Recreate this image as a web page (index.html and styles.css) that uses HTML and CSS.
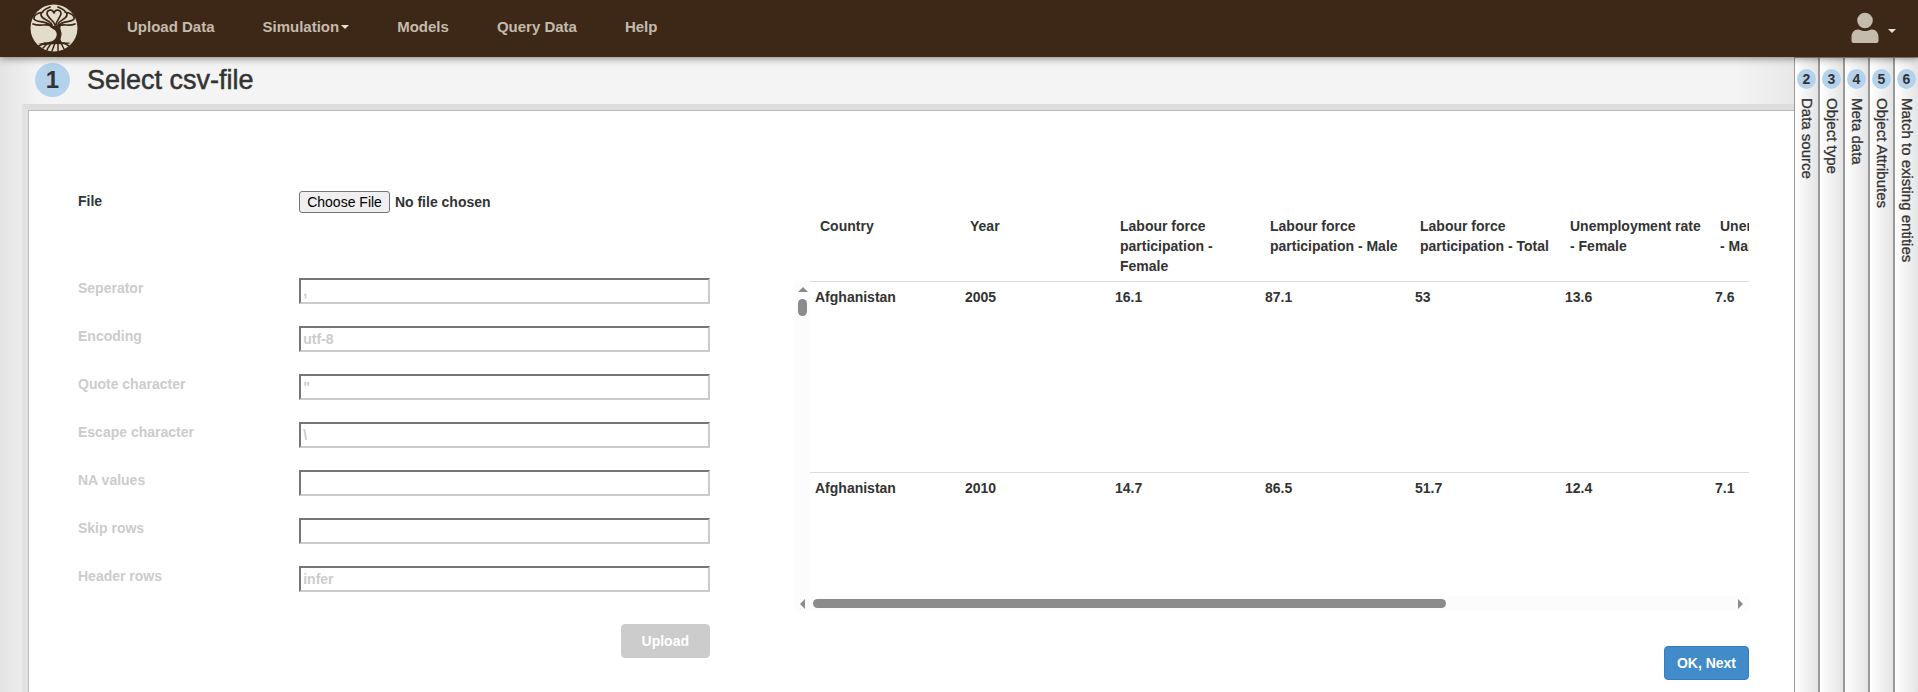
FILE: index.html
```html
<!DOCTYPE html>
<html lang="en">
<head>
<meta charset="utf-8">
<title>Select csv-file</title>
<link rel="stylesheet" href="styles.css">
</head>
<body>
<nav class="navbar">
  <a class="brand" href="#" aria-label="Home">
    <svg viewBox="0 0 48 48" width="48" height="48" fill="none" stroke="#3d2817" stroke-linecap="round" stroke-linejoin="round">
      <circle cx="24" cy="24" r="23.500" fill="#e3dccb" stroke="none"/>
      <path fill="#3d2817" stroke="none" d="M18 20 L24 22 L32 20 C29 23 31 26 31.500 29 C32 33 29 35 32 38 C35 39 38 38 41 39 C36 41 32 40 27 40 C20 40 14 42 8 40 C14 38 22 39 25 35 C28 31 27 27 23 25 C21 24 19 22 18 20 Z"/>
      <path stroke-width="1.700" d="M22 22 C16 19 11 23 3 20 M20 21 C14 16 7 19 4 15 C3 11 8 9 13 8 M22 21 C20 16 12 16 11 11 C11 7 15 5 20 3 M25 21 C24 17 18 14 17 10 C17 5 23 5 24 9 C25 5 31 5 31 10 C30 14 26 17 26 21 M28 21 C28 16 36 16 37 11 C37 7 33 5 28 3 M29 21 C34 16 41 19 44 15 C45 11 40 9 35 8 M29 22 C34 19 38 23 45 20"/>
      <path stroke-width="1.500" d="M15 39 L9 42 M18 39 L13 44 M21 39 C20 42 18 43 17 46 M25 39 L22 47 M28 39 L28 47 M31 39 L34 45 M34 39 L39 42"/>
    </svg>
  </a>
  <div class="menu">
    <a href="#">Upload Data</a>
    <a href="#">Simulation<span class="caret"></span></a>
    <a href="#">Models</a>
    <a href="#">Query Data</a>
    <a href="#">Help</a>
  </div>
  <button class="user" type="button" aria-label="Account">
    <svg viewBox="0 0 28 32" width="28" height="32" fill="#c4bbad">
      <circle cx="14" cy="8.500" r="7.800"/>
      <path d="M7 17.500 C9 17.500 10 19 14 19 C18 19 19 17.500 21 17.500 C25 17.500 27.500 21 27.500 25 V29 Q27.500 31 25.500 31 H2.500 Q.5 31 .5 29 V25 C.5 21 3 17.500 7 17.500 Z"/>
    </svg>
    <span class="caret caret-user"></span>
  </button>
</nav>
<div class="wizard">
  <main class="step">
    <header class="step-head"><span class="num num-big">1</span><h1>Select csv-file</h1></header>
    <section class="panel">
      <form class="form">
        <div class="field field-file"><label for="file">File</label><input id="file" type="file"></div>
        <div class="field"><label for="sep">Seperator</label><input id="sep" type="text" value=","></div>
        <div class="field"><label for="enc">Encoding</label><input id="enc" type="text" value="utf-8"></div>
        <div class="field"><label for="quote">Quote character</label><input id="quote" type="text" value="&quot;"></div>
        <div class="field"><label for="esc">Escape character</label><input id="esc" type="text" value="\"></div>
        <div class="field"><label for="na">NA values</label><input id="na" type="text"></div>
        <div class="field"><label for="skip">Skip rows</label><input id="skip" type="text"></div>
        <div class="field"><label for="head">Header rows</label><input id="head" type="text" value="infer"></div>
        <button class="btn btn-upload" type="button">Upload</button>
      </form>
      <div class="preview">
        <div class="viewer">
          <div class="table-clip">
            <table>
              <thead><tr><th>Country</th><th>Year</th><th>Labour force participation - Female</th><th>Labour force participation - Male</th><th>Labour force participation - Total</th><th>Unemployment rate - Female</th><th>Unemployment rate - Male</th></tr></thead>
              <tbody>
                <tr><td>Afghanistan</td><td>2005</td><td>16.1</td><td>87.1</td><td>53</td><td>13.6</td><td>7.6</td></tr>
                <tr><td>Afghanistan</td><td>2010</td><td>14.7</td><td>86.5</td><td>51.7</td><td>12.4</td><td>7.1</td></tr>
              </tbody>
            </table>
          </div>
          <div class="vbar"><span class="arrow arrow-up"></span><span class="vthumb"></span></div>
          <div class="hbar"><span class="arrow arrow-left"></span><span class="htrack"><span class="hthumb"></span></span><span class="arrow arrow-right"></span></div>
        </div>
        <button class="btn btn-next" type="button">OK, Next</button>
      </div>
    </section>
  </main>
  <aside class="tabs">
    <button class="tab" type="button"><span class="num">2</span><span class="tab-label">Data source</span></button>
    <button class="tab" type="button"><span class="num">3</span><span class="tab-label">Object type</span></button>
    <button class="tab" type="button"><span class="num">4</span><span class="tab-label">Meta data</span></button>
    <button class="tab" type="button"><span class="num">5</span><span class="tab-label">Object Attributes</span></button>
    <button class="tab" type="button"><span class="num">6</span><span class="tab-label">Match to existing entities</span></button>
  </aside>
</div>
</body>
</html>
```

FILE: styles.css
```css
* { box-sizing: border-box; }

body {
  margin: 0;
  min-height: 100vh;
  display: flex;
  flex-direction: column;
  overflow: hidden;
  font: bold 14px/20px "Liberation Sans", Arial, sans-serif;
  color: #333;
  background: #fff;
}

button, input { font: inherit; color: inherit; }

.navbar {
  display: flex;
  align-items: center;
  height: 57px;
  padding: 0 22px 2px 30px;
  background: #3d2817;
  box-shadow: 0 1px 8px rgba(0, 0, 0, .5);
  z-index: 1;
}
.brand { display: flex; }
.menu { display: flex; gap: 48px; margin: 0 auto 0 49px; padding-bottom: 1px; }
.menu a {
  display: flex;
  align-items: center;
  gap: 2px;
  color: #c4bbad;
  font-size: 15px;
  text-decoration: none;
}
.caret {
  border: 4px solid transparent;
  border-top-color: #e8e0d4;
  border-bottom: 0;
}
.user {
  display: flex;
  align-items: center;
  gap: 9px;
  padding: 0;
  border: 0;
  background: none;
}
.caret-user { margin-top: 6px; }

.wizard { flex: 1; display: flex; }
.step {
  flex: 1;
  min-width: 0;
  display: flex;
  flex-direction: column;
  background: linear-gradient(90deg, #e4e4e4, #f4f4f4 40px, #f4f4f4 calc(100% - 60px), #e8e8e8);
}
.step-head {
  display: flex;
  align-items: center;
  gap: 17px;
  height: 47px;
  padding: 0 0 1px 35px;
}
h1 { margin: 0; font-size: 27px; font-weight: normal; -webkit-text-stroke: .5px #333; }
.num {
  display: flex;
  align-items: center;
  justify-content: center;
  width: 19px;
  height: 20px;
  border-radius: 50%;
  background: #b5d2ec;
}
.num-big { width: 35px; height: 34px; font-size: 24px; }

.panel {
  flex: 1;
  display: grid;
  grid-template-columns: 632fr 954fr;
  gap: 85px;
  align-items: start;
  margin-left: 22px;
  padding: 81px 45px 0 50px;
  border: solid #ddd;
  border-width: 6px 0 0 6px;
  border-left-color: #e2e2e2;
  background: #fff;
  box-shadow: inset 1px 1px #bbb;
}

.form { display: flex; flex-direction: column; }
.field {
  display: grid;
  grid-template-columns: 35% 65%;
  align-items: start;
  height: 48px;
  color: #ccc;
}
.field-file { height: 87px; color: #333; }
.field input[type="text"] {
  width: 100%;
  height: 26px;
  padding: 2px;
  border: 2px solid;
  border-color: #767676 #ccc #ccc #767676;
  background: #fff;
}
.field input[type="file"]::file-selector-button {
  height: 22px;
  margin-right: 5px;
  padding: 0 7px;
  border: 1px solid #767676;
  border-radius: 3px;
  background: #efefef;
  color: #000;
  font-weight: normal;
}

.btn {
  align-self: flex-end;
  height: 34px;
  padding: 0 12px;
  border: 1px solid #357ebd;
  border-radius: 4px;
  background: #428bca;
  color: #fff;
}
.btn-upload { margin-top: 10px; padding: 0 20px; background: #ccc; border-color: #ccc; }

.preview { display: flex; flex-direction: column; gap: 35px; padding-top: 20px; }
.viewer { display: grid; grid-template-columns: 15px 1fr; grid-template-rows: 70px 315px 15px; min-width: 0; }
.table-clip { grid-area: 1 / 2 / 3 / 3; overflow: hidden; }
table { width: 1050px; table-layout: fixed; border-collapse: collapse; }
th, td { vertical-align: top; text-align: left; }
th { height: 70px; padding: 5px 5px 5px 10px; }
td { height: 191px; padding: 5px; border-top: 1px solid #ddd; }

.vbar {
  grid-area: 2 / 1;
  display: flex;
  flex-direction: column;
  align-items: center;
  gap: 7px;
  padding-top: 6px;
  background: #fcfcfc;
}
.vthumb { width: 9px; height: 17px; border-radius: 5px; background: #8b8b8b; }
.hbar { grid-area: 3 / 1 / 4 / 3; display: flex; align-items: center; gap: 8px; padding: 0 6px 0 5px; background: #fcfcfc; }
.htrack { flex: 1; display: flex; }
.hthumb { width: 69%; height: 9px; border-radius: 5px; background: #8b8b8b; }
.arrow { border: 5px solid transparent; }
.arrow-up { border-top: 0; border-bottom-color: #8b8b8b; }
.arrow-left { border-left: 0; border-right-color: #8b8b8b; }
.arrow-right { border-right: 0; border-left-color: #8b8b8b; }

.tabs { display: flex; margin-right: -1px; }
.tab {
  display: flex;
  flex-direction: column;
  align-items: center;
  justify-content: flex-start;
  gap: 9px;
  width: 25px;
  padding: 11px 0 0;
  border: 1px solid #999;
  border-bottom: 0;
  background: linear-gradient(90deg, #fff, #e4e4e4);
}
.tab-label { writing-mode: vertical-rl; font-size: 15px; font-weight: normal; -webkit-text-stroke: .3px #333; }
```
